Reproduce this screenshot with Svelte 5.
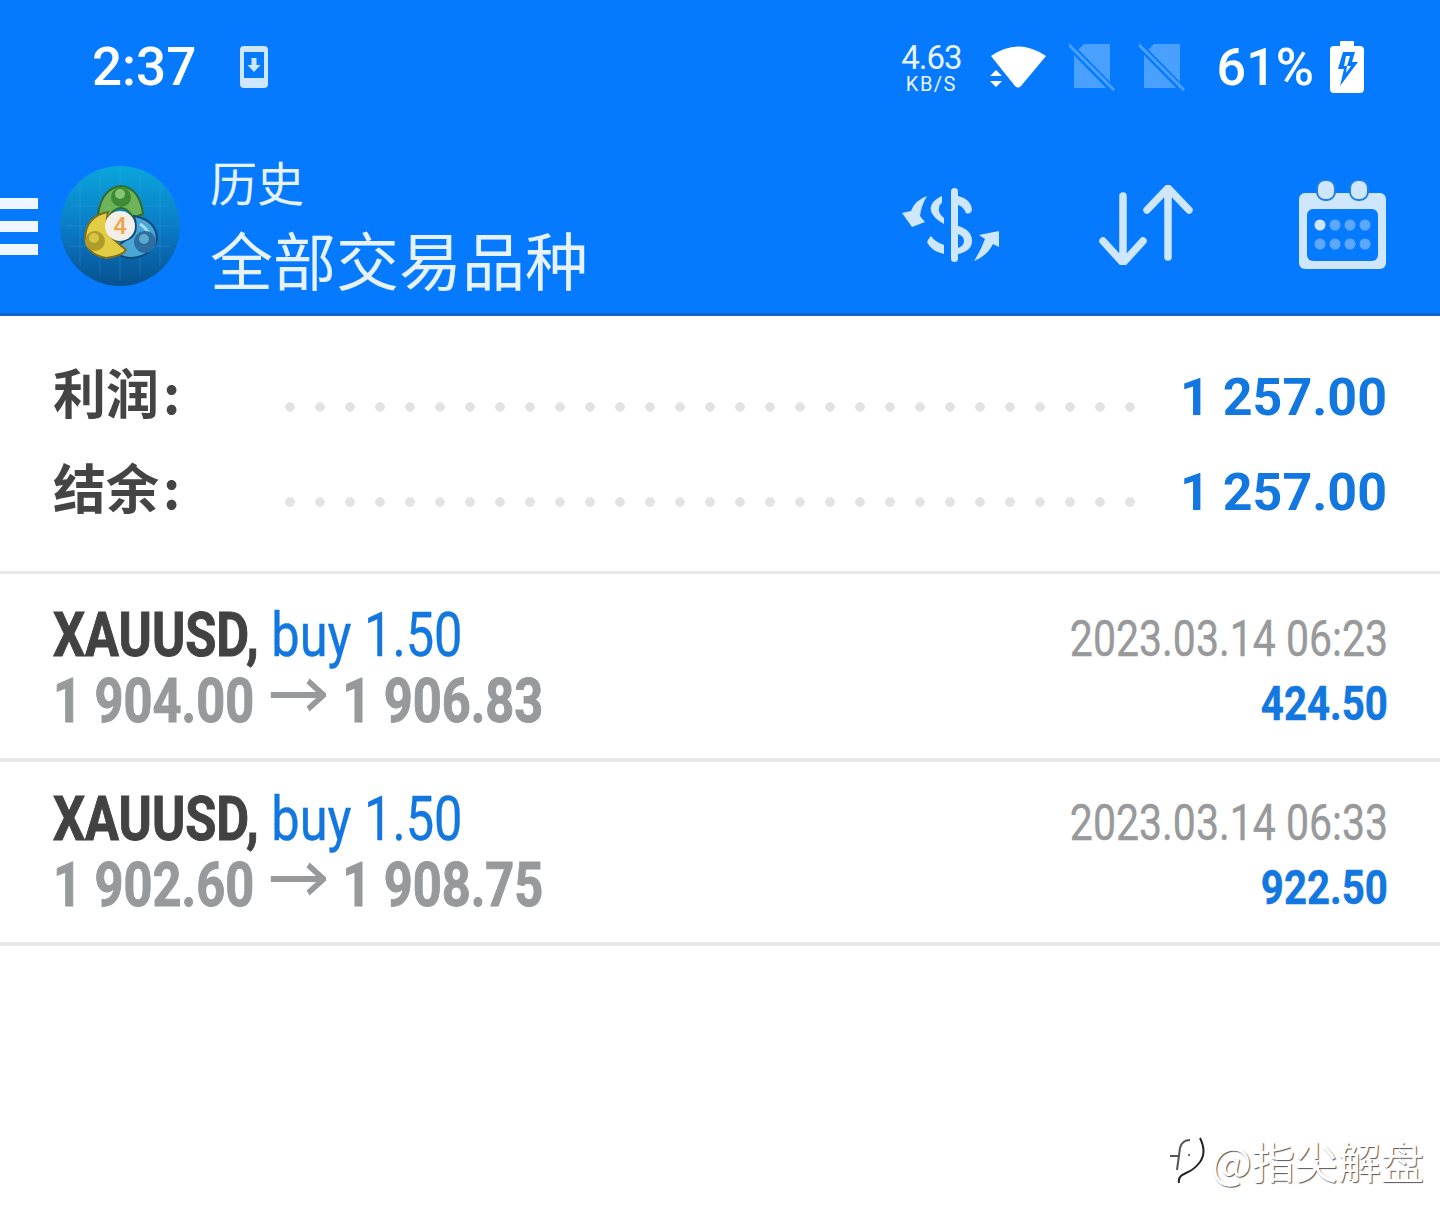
<script>
  const summary = [
    { label: '利润', value: '1 257.00' },
    { label: '结余', value: '1 257.00' }
  ];
  const deals = [
    { open: '1 904.00', close: '1 906.83', time: '2023.03.14 06:23', profit: '424.50' },
    { open: '1 902.60', close: '1 908.75', time: '2023.03.14 06:33', profit: '922.50' }
  ];
</script>

<main>
  <header>
    <div class="status">
      <div class="status-left">
        <span class="clock">2:37</span>
        <svg class="phone" width="28" height="42" viewBox="0 0 28 42">
          <rect width="28" height="42" rx="4" fill="#cfe6ff" />
          <rect x="4" y="6" width="20" height="26" fill="#067aff" />
          <path d="M11.5 12h5v7h4L14 26l-6.500-7h4z" fill="#cfe6ff" />
        </svg>
      </div>
      <div class="status-right">
        <div class="speed"><span class="speed-num">4.63</span><span class="speed-unit">KB/S</span></div>
        <svg class="wifi" width="58" height="48" viewBox="0 0 58 48">
          <path d="M2 13Q29-6 57 13L32 43Q29 46 26 43z" fill="#fff" />
          <path d="M1 33l6-6 6 6zM1 38h12l-6 6z" fill="#fff" />
        </svg>
        <svg class="sim" width="46" height="48" viewBox="0 0 46 48">
          <path d="M15 1h26v44H5V11z" fill="#4aa0ff" />
          <path d="M0 2l44 45" stroke="#067aff" stroke-width="7" />
          <path d="M-1 1l46 46" stroke="#4aa0ff" stroke-width="3" />
        </svg>
        <svg class="sim" width="46" height="48" viewBox="0 0 46 48">
          <path d="M15 1h26v44H5V11z" fill="#4aa0ff" />
          <path d="M0 2l44 45" stroke="#067aff" stroke-width="7" />
          <path d="M-1 1l46 46" stroke="#4aa0ff" stroke-width="3" />
        </svg>
        <span class="battery-text">61%</span>
        <svg class="battery" width="34" height="52" viewBox="0 0 34 52">
          <path d="M10 1q0-1 1-1h12q1 0 1 1v4h6q4 0 4 4v39q0 4-4 4H4q-4 0-4-4V9q0-4 4-4h6z" fill="#fff" />
          <path d="M13 11h12l-3 10h6L10 45l4-17H8z" fill="#067aff" />
          <path d="M16 15h4l-3 10h4l-5 7 1-7h-3z" fill="#fff" />
        </svg>
      </div>
    </div>

    <div class="toolbar">
      <div class="burger"><i></i><i></i><i></i></div>
      <svg class="logo" width="120" height="120" viewBox="0 0 120 120">
        <defs>
          <linearGradient id="disc" x1="0" y1="0" x2="0" y2="1">
            <stop offset="0" stop-color="#0aa6dc" />
            <stop offset="0.55" stop-color="#0a78c4" />
            <stop offset="1" stop-color="#07518f" />
          </linearGradient>
        </defs>
        <circle cx="60" cy="60" r="60" fill="url(#disc)" />
        <path d="M20 20v80M40 10v100M60 5v110M80 10v100M100 20v80M10 40h100M5 60h110M10 80h100" stroke="#5cc3ee" stroke-opacity=".18" stroke-width="1" />
        <path d="M38 48Q42 22 61 20Q80 22 83 48L73 52Q68 42 61 42Q54 42 48 52z" fill="#6db35a" stroke="#2f6d2a" stroke-width="2" />
        <circle cx="61" cy="31" r="10" fill="#3f8a35" />
        <circle cx="60" cy="28" r="5" fill="#86c672" />
        <path d="M74 50Q97 54 97 74Q92 90 72 92Q60 92 52 84L66 74Q80 70 74 50z" fill="#4aa6d6" stroke="#124a78" stroke-width="2" />
        <path d="M80 58Q90 64 88 72" fill="none" stroke="#a6dcf2" stroke-width="3" />
        <circle cx="85" cy="76" r="11" fill="#2a6f9f" />
        <circle cx="84" cy="73" r="5" fill="#5fa8cf" />
        <path d="M48 46Q26 50 25 72Q26 88 46 92Q62 90 66 84L52 72Q44 62 48 46z" fill="#e2cd45" stroke="#7f6f1a" stroke-width="2" />
        <circle cx="35" cy="75" r="10" fill="#b09c28" />
        <circle cx="34" cy="72" r="5" fill="#d8c548" />
        <circle cx="60" cy="60" r="15" fill="#f4efe6" />
        <text class="logo-four" x="60" y="68" text-anchor="middle">4</text>
      </svg>
      <div class="titles">
        <span class="title-small">历史</span>
        <span class="title-big">全部交易品种</span>
      </div>
      <div class="actions">
        <svg width="100" height="78" viewBox="0 0 100 78" fill="#cfe6ff">
          <path d="M26 10Q14 14 10 25L1 27 11 41 24 36 19 30Q20 20 26 10z" />
          <path d="M41 10Q28 16 30 25Q32 32 43 38V32Q37 27 38 23Q38 18 41 17z" />
          <rect x="50" y="2" width="7" height="74" rx="3.500" />
          <path d="M57 10Q70 13 71 24Q69 29 65 27Q62 20 57 19z" />
          <path fill-rule="evenodd" d="M57 40Q71 44 71 55Q71 65 57 68zM57 48V62Q63 60 63 55Q63 50 57 48z" />
          <path d="M30 50Q28 52 26 56Q30 65 43 68V59Q34 56 30 50z" />
          <path d="M73 75Q86 70 92 58L98 61 98 45 78 49 84 53Q80 64 73 75z" />
        </svg>
        <svg width="94" height="80" viewBox="0 0 94 80" fill="none" stroke="#cfe6ff" stroke-width="7.500" stroke-linecap="round" stroke-linejoin="round">
          <path d="M24 11v65M4 56l20 22 20-22" />
          <path d="M69 72V4M48 25 69 3l21 22" />
        </svg>
        <svg class="calendar" width="88" height="90" viewBox="0 0 88 90">
          <rect x="0" y="13" width="87" height="76" rx="6" fill="#cfe6ff" />
          <rect x="18" y="0" width="18" height="20" rx="8" fill="#cfe6ff" stroke="#1d7fe8" stroke-width="2" />
          <rect x="51" y="0" width="18" height="20" rx="8" fill="#cfe6ff" stroke="#1d7fe8" stroke-width="2" />
          <rect x="8" y="29" width="71" height="52" rx="6" fill="#067aff" />
          <circle cx="21" cy="45" r="5.500" fill="#cfe6ff" />
          <circle cx="36" cy="45" r="5.500" fill="#5ca8ff" />
          <circle cx="51" cy="45" r="5.500" fill="#5ca8ff" />
          <circle cx="66" cy="45" r="5.500" fill="#5ca8ff" />
          <circle cx="21" cy="64" r="5.500" fill="#5ca8ff" />
          <circle cx="36" cy="64" r="5.500" fill="#5ca8ff" />
          <circle cx="51" cy="64" r="5.500" fill="#5ca8ff" />
          <circle cx="66" cy="64" r="5.500" fill="#5ca8ff" />
        </svg>
      </div>
    </div>
  </header>

  <section class="summary">
    {#each summary as row}
      <div class="sum-row">
        <span class="sum-label">{row.label}<span class="colon">:</span></span>
        <span class="dots"></span>
        <span class="sum-value">{row.value}</span>
      </div>
    {/each}
  </section>

  {#each deals as deal}
    <article class="deal">
      <div class="line top">
        <span class="cond"><b>XAUUSD,</b> <span class="blue">buy 1.50</span></span>
        <span class="cond-r time">{deal.time}</span>
      </div>
      <div class="line bottom">
        <span class="cond prices">{deal.open}<svg class="arrow" width="68" height="34" viewBox="0 0 68 34" fill="none" stroke="#98999b" stroke-width="6"><path d="M0 17h64M46 3l19 14-19 14" /></svg>{deal.close}</span>
        <span class="cond-r profit">{deal.profit}</span>
      </div>
    </article>
  {/each}

  <div class="watermark">
    <svg width="42" height="52" viewBox="0 0 42 52" fill="none">
      <path d="M5 22h8M12 36 15 14q2-8 10-8" stroke="#555" stroke-width="2" />
      <path d="M35 4q7 14 0 24q-6 8-14 11l-4 2q-4 3-3 8" stroke="#222" stroke-width="2" />
      <circle cx="24" cy="21" r="1" fill="#444" />
    </svg>
    <span>@指尖解盘</span>
  </div>
</main>

<style>
  :global(body) {
    background: #fff;
  }

  main {
    position: relative;
    height: 1231px;
    overflow: hidden;
    font-family: Roboto, "Noto Sans CJK SC", sans-serif;
    background: #fff;
  }

  header {
    height: 316px;
    box-sizing: border-box;
    background: #067aff;
    border-bottom: 3px solid #0b67c9;
  }

  .status {
    display: flex;
    justify-content: space-between;
    align-items: center;
    height: 134px;
    padding: 0 76px 0 92px;
  }

  .status-left,
  .status-right {
    display: flex;
    align-items: center;
  }

  .clock {
    font-size: 53px;
    font-weight: 500;
    color: #fff;
  }

  .phone {
    margin-left: 44px;
  }

  .speed {
    display: flex;
    flex-direction: column;
    align-items: center;
    color: #e8f3ff;
    margin-top: 2px;
  }

  .speed-num {
    font-size: 33px;
    line-height: 32px;
    letter-spacing: -1px;
  }

  .speed-unit {
    font-size: 20px;
    line-height: 20px;
    letter-spacing: 1.500px;
  }

  .wifi {
    margin-left: 27px;
  }

  .sim {
    margin-left: 22px;
  }

  .sim + .sim {
    margin-left: 24px;
  }

  .battery-text {
    font-size: 52px;
    font-weight: 500;
    color: #fff;
    margin-left: 32px;
  }

  .battery {
    margin-left: 16px;
  }

  .toolbar {
    display: flex;
    align-items: center;
    height: 179px;
  }

  .burger {
    display: flex;
    flex-direction: column;
    gap: 12px;
    width: 38px;
    margin: 6px 22px 0 0;
  }

  .burger i {
    display: block;
    height: 11px;
    background: #eef6ff;
  }

  .logo {
    flex: none;
    margin-top: 4px;
  }

  .titles {
    display: flex;
    flex-direction: column;
    margin: 12px 0 0 30px;
    color: #e6f2ff;
    font-family: "Noto Sans CJK SC", sans-serif;
  }

  .title-small {
    font-size: 47px;
    line-height: 56px;
  }

  .title-big {
    font-size: 63px;
    line-height: 98px;
  }

  .logo-four {
    font-family: Roboto, sans-serif;
    font-size: 24px;
    font-weight: 500;
    fill: #eda54f;
  }

  .actions {
    display: flex;
    align-items: center;
    gap: 98px;
    margin: 2px 53px 0 auto;
  }

  .calendar {
    margin-left: 8px;
  }

  .summary {
    box-sizing: border-box;
    height: 258px;
    padding: 30px 53px 0;
    border-bottom: 3px solid #e6e7e8;
  }

  .sum-row {
    display: flex;
    align-items: center;
    height: 95px;
  }

  .sum-label {
    width: 232px;
    margin-top: -6px;
    font-family: "Noto Sans CJK SC", sans-serif;
    font-size: 53px;
    font-weight: 700;
    color: #444;
  }

  .colon {
    margin-left: 4px;
  }

  .dots {
    width: 856px;
    height: 10px;
    margin-top: 26px;
    background: radial-gradient(circle at 5px 5px, #e2e3e5 4.500px, transparent 5px) 0 0 / 30px 10px repeat-x;
  }

  .sum-value {
    margin: 8px 0 0 auto;
    font-size: 52px;
    font-weight: 700;
    color: #1277de;
    white-space: nowrap;
  }

  .deal {
    box-sizing: border-box;
    height: 184px;
    padding: 23px 52px 0 53px;
    border-bottom: 4px solid #e6e7e8;
  }

  .summary + .deal {
    margin-top: 4px;
  }

  .line {
    display: flex;
    justify-content: space-between;
    height: 64px;
    align-items: center;
  }

  .top {
    height: 66px;
  }

  .bottom {
    margin-top: 1px;
  }

  .cond,
  .cond-r {
    display: inline-block;
    white-space: nowrap;
    transform: scaleX(0.815);
  }

  .cond {
    transform-origin: left center;
    font-size: 62px;
  }

  .cond-r {
    transform: scaleX(0.82);
    transform-origin: right center;
    margin-top: 10px;
  }

  .cond b {
    font-weight: 700;
    color: #424242;
    -webkit-text-stroke: 1px #424242;
  }

  .blue {
    color: #1277de;
    -webkit-text-stroke: 0.4px #1277de;
  }

  .prices {
    font-weight: 700;
    color: #98999b;
    -webkit-text-stroke: 1px #98999b;
  }

  .arrow {
    margin: 0 20px;
    vertical-align: 10px;
  }

  .time {
    font-size: 50px;
    color: #98999b;
    -webkit-text-stroke: 0.4px #98999b;
  }

  .profit {
    margin-top: 7px;
    font-size: 49px;
    font-weight: 700;
    color: #1277de;
    -webkit-text-stroke: 0.5px #1277de;
  }

  .watermark {
    position: absolute;
    left: 1165px;
    top: 1129px;
    display: flex;
    align-items: center;
    gap: 4px;
    font-family: "Noto Sans CJK SC", sans-serif;
    font-size: 43px;
    color: #fff;
    text-shadow: 1px 1px 1px #555;
  }
</style>
